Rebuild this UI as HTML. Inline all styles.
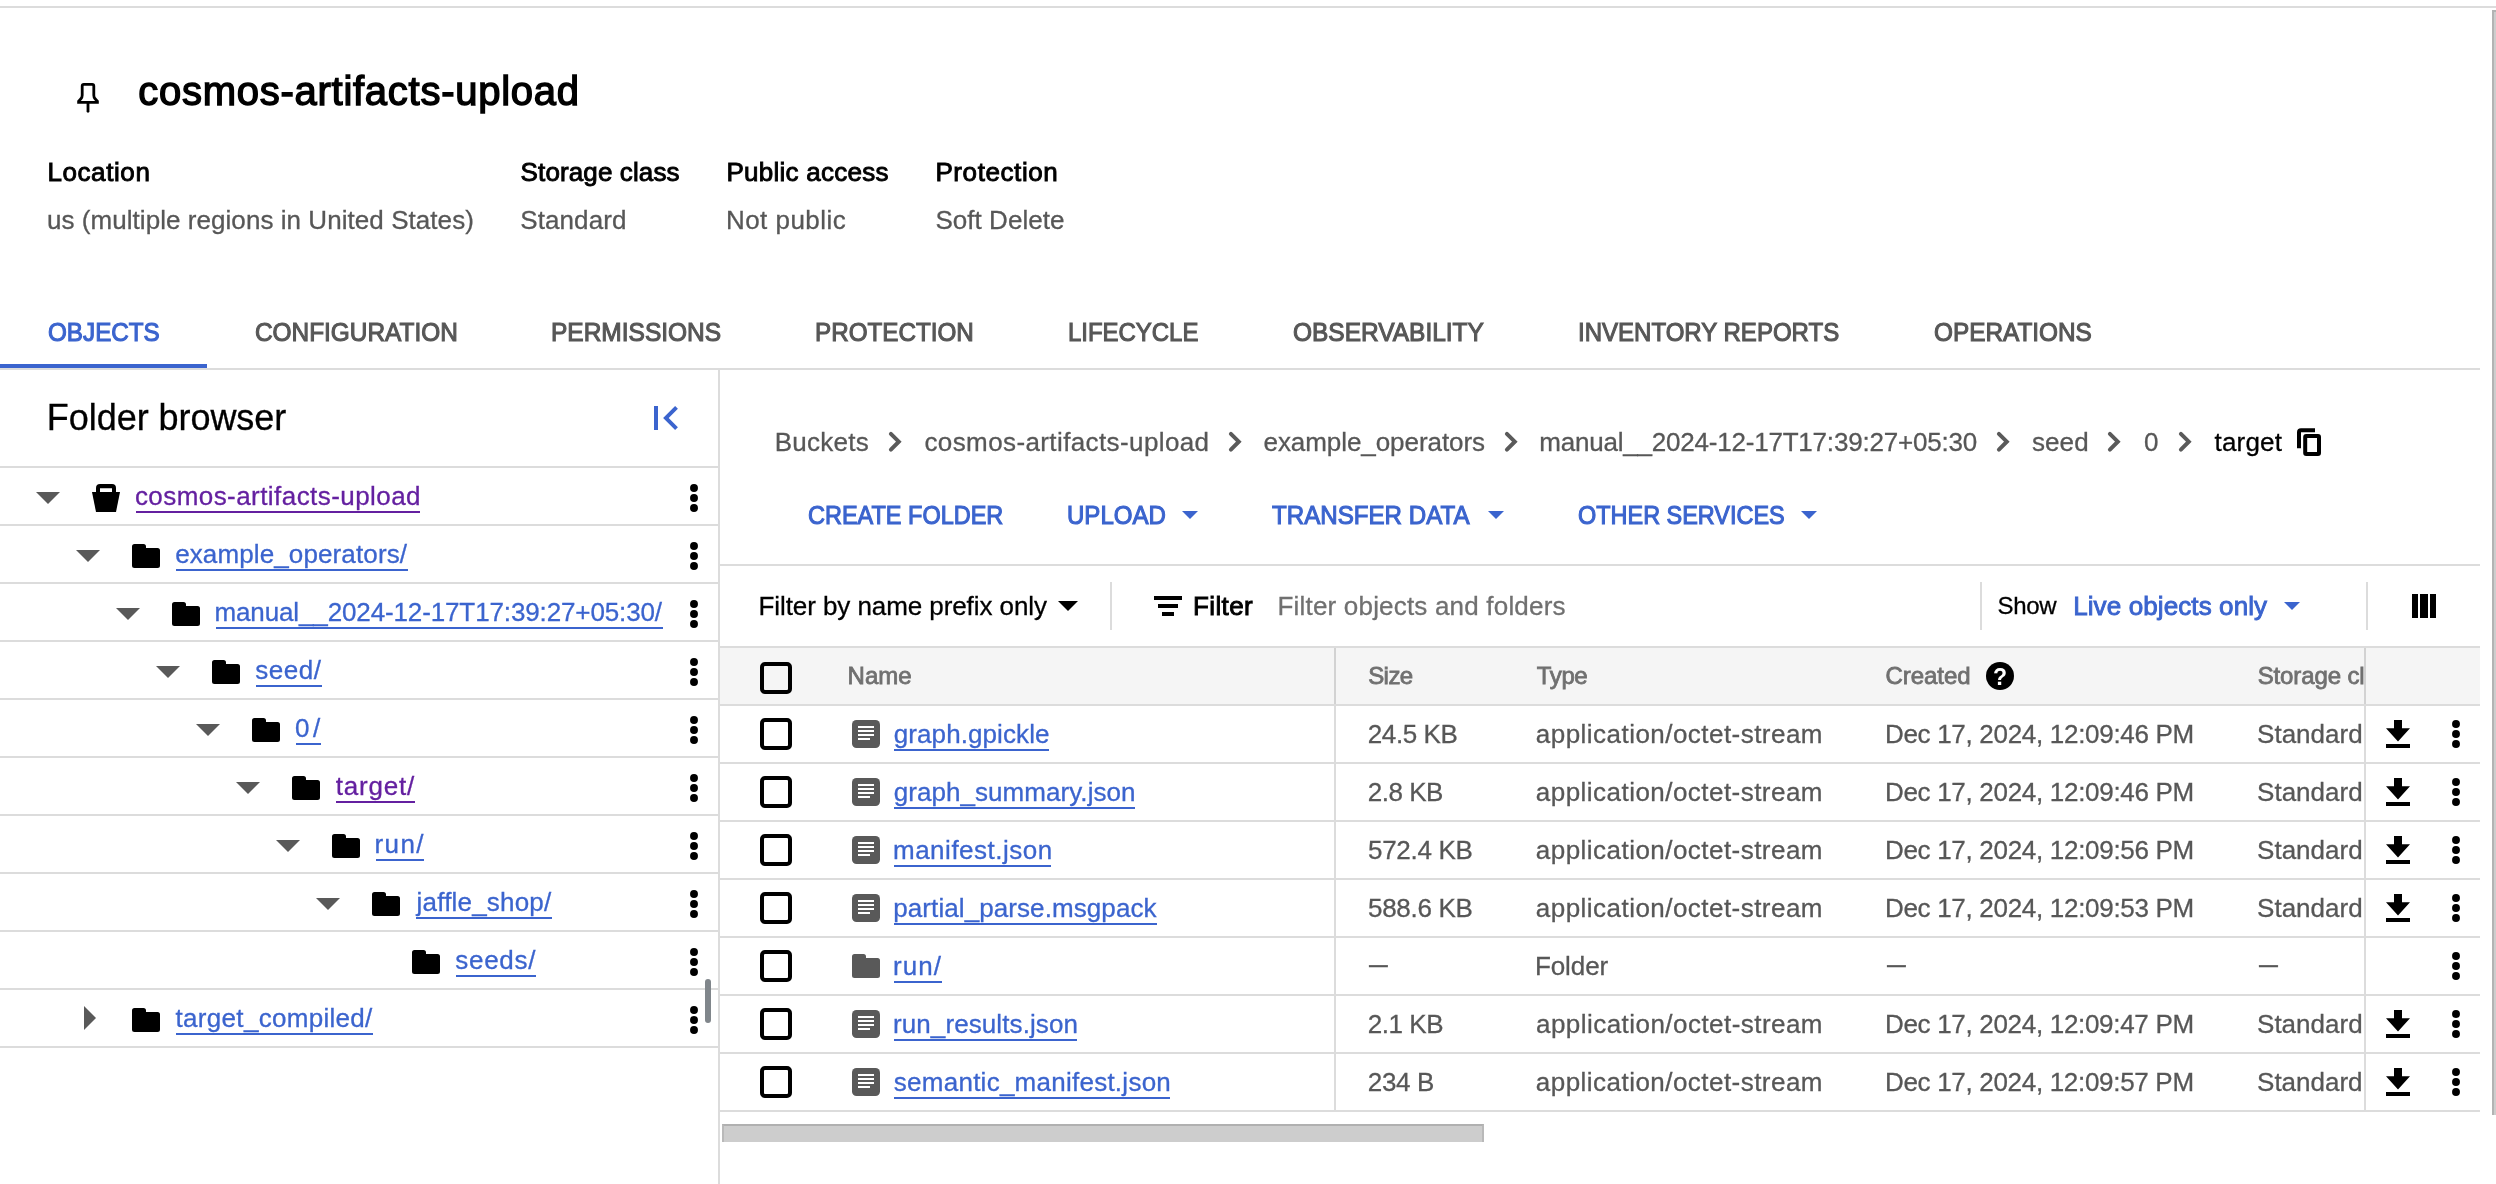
<!DOCTYPE html>
<html lang="en"><head><meta charset="utf-8"><title>cosmos-artifacts-upload - Bucket details</title>
<style>
html,body{margin:0;padding:0;background:#fff}
body{width:2496px;height:1184px;position:relative;overflow:hidden;font-family:"Liberation Sans",sans-serif}
.t{position:absolute;white-space:nowrap;line-height:1;font-weight:400;transform-origin:0 50%;margin:0;padding:0;display:block}
.b{position:absolute}
svg.ic{position:absolute;left:0;top:0}
header,nav,aside,main{position:absolute;left:0;top:0;width:0;height:0;will-change:transform}
.clip{position:absolute;left:2200px;top:648px;width:164px;height:56px;overflow:hidden}
a{color:inherit;text-decoration:none}
</style></head>
<body>
<div id="lines">
<div class="b" style="left:0px;top:6px;width:2496px;height:2px;background:#dcdcdc"></div>
<div class="b" style="left:2492px;top:10px;width:4px;height:1105px;background:#cdcdcd;border-left:2px solid #b3b3b3;border-top:2px solid #b3b3b3;box-sizing:border-box"></div>
<div class="b" style="left:0px;top:368px;width:2480px;height:2px;background:#dcdcdc"></div>
<div class="b" style="left:0px;top:364px;width:207px;height:4px;background:#3b64ce"></div>
<div class="b" style="left:718px;top:370px;width:2px;height:814px;background:#dcdcdc"></div>
<div class="b" style="left:0px;top:466px;width:718px;height:2px;background:#dcdcdc"></div>
<div class="b" style="left:0px;top:524px;width:718px;height:2px;background:#dcdcdc"></div>
<div class="b" style="left:0px;top:582px;width:718px;height:2px;background:#dcdcdc"></div>
<div class="b" style="left:0px;top:640px;width:718px;height:2px;background:#dcdcdc"></div>
<div class="b" style="left:0px;top:698px;width:718px;height:2px;background:#dcdcdc"></div>
<div class="b" style="left:0px;top:756px;width:718px;height:2px;background:#dcdcdc"></div>
<div class="b" style="left:0px;top:814px;width:718px;height:2px;background:#dcdcdc"></div>
<div class="b" style="left:0px;top:872px;width:718px;height:2px;background:#dcdcdc"></div>
<div class="b" style="left:0px;top:930px;width:718px;height:2px;background:#dcdcdc"></div>
<div class="b" style="left:0px;top:988px;width:718px;height:2px;background:#dcdcdc"></div>
<div class="b" style="left:0px;top:1046px;width:718px;height:2px;background:#dcdcdc"></div>
<div class="b" style="left:705px;top:979px;width:6px;height:44px;background:#80868b;border-radius:3px"></div>
<div class="b" style="left:720px;top:564px;width:1760px;height:2px;background:#dcdcdc"></div>
<div class="b" style="left:1110px;top:582px;width:2px;height:48px;background:#dcdcdc"></div>
<div class="b" style="left:1980px;top:582px;width:2px;height:48px;background:#dcdcdc"></div>
<div class="b" style="left:2366px;top:582px;width:2px;height:48px;background:#dcdcdc"></div>
<div class="b" style="left:720px;top:648px;width:1760px;height:56px;background:#f5f5f5"></div>
<div class="b" style="left:720px;top:646px;width:1760px;height:2px;background:#dcdcdc"></div>
<div class="b" style="left:720px;top:704px;width:1760px;height:2px;background:#dcdcdc"></div>
<div class="b" style="left:720px;top:762px;width:1760px;height:2px;background:#dcdcdc"></div>
<div class="b" style="left:720px;top:820px;width:1760px;height:2px;background:#dcdcdc"></div>
<div class="b" style="left:720px;top:878px;width:1760px;height:2px;background:#dcdcdc"></div>
<div class="b" style="left:720px;top:936px;width:1760px;height:2px;background:#dcdcdc"></div>
<div class="b" style="left:720px;top:994px;width:1760px;height:2px;background:#dcdcdc"></div>
<div class="b" style="left:720px;top:1052px;width:1760px;height:2px;background:#dcdcdc"></div>
<div class="b" style="left:720px;top:1110px;width:1760px;height:2px;background:#dcdcdc"></div>
<div class="b" style="left:1334px;top:648px;width:2px;height:462px;background:#dcdcdc"></div>
<div class="b" style="left:2364px;top:648px;width:2px;height:462px;background:#dcdcdc"></div>
<div class="b" style="left:1334px;top:648px;width:2px;height:56px;background:#d2d2d2"></div>
<div class="b" style="left:2364px;top:648px;width:2px;height:56px;background:#d2d2d2"></div>
<div class="b" style="left:722px;top:1124px;width:762px;height:18px;background:#cdcdcd;border-top:2px solid #b0b0b0;border-left:2px solid #b9b9b9;border-right:2px solid #b9b9b9;box-sizing:border-box"></div>
</div>
<header id="bucket-header">
<h1 id="t0" class="t m" style="left:138.25px;top:71.04px;font-size:40px;color:#000;letter-spacing:0.734px;-webkit-text-stroke:1.4px #000">cosmos-artifacts-upload</h1>
<span id="t1" class="t m" style="left:47.43px;top:158.99px;font-size:26px;color:#000;letter-spacing:0.594px;-webkit-text-stroke:0.9px #000">Location</span>
<span id="t2" class="t m" style="left:520.62px;top:158.99px;font-size:26px;color:#000;letter-spacing:0.120px;-webkit-text-stroke:0.9px #000">Storage class</span>
<span id="t3" class="t m" style="left:726.43px;top:158.99px;font-size:26px;color:#000;letter-spacing:0.258px;-webkit-text-stroke:0.9px #000">Public access</span>
<span id="t4" class="t m" style="left:935.43px;top:158.99px;font-size:26px;color:#000;letter-spacing:0.589px;-webkit-text-stroke:0.9px #000">Protection</span>
<span id="t5" class="t" style="left:46.92px;top:206.99px;font-size:26px;color:#575757;letter-spacing:0.056px;-webkit-text-stroke:0.3px #575757">us (multiple regions in United States)</span>
<span id="t6" class="t" style="left:520.21px;top:206.99px;font-size:26px;color:#575757;letter-spacing:0.105px;-webkit-text-stroke:0.3px #575757">Standard</span>
<span id="t7" class="t" style="left:725.94px;top:206.99px;font-size:26px;color:#575757;letter-spacing:0.459px;-webkit-text-stroke:0.3px #575757">Not public</span>
<span id="t8" class="t" style="left:935.51px;top:206.99px;font-size:26px;color:#575757;letter-spacing:0.024px;-webkit-text-stroke:0.3px #575757">Soft Delete</span>
</header>
<nav id="tabs">
<a id="t9" class="t m" style="left:47.89px;top:318.99px;font-size:26px;color:#3b64ce;letter-spacing:0.000px;-webkit-text-stroke:1.1px #3b64ce;transform:scaleX(0.9320)">OBJECTS</a>
<a id="t10" class="t m" style="left:255.15px;top:318.99px;font-size:26px;color:#575757;letter-spacing:0.000px;-webkit-text-stroke:1.1px #575757;transform:scaleX(0.9380)">CONFIGURATION</a>
<a id="t11" class="t m" style="left:551.10px;top:318.99px;font-size:26px;color:#575757;letter-spacing:0.000px;-webkit-text-stroke:1.1px #575757;transform:scaleX(0.9420)">PERMISSIONS</a>
<a id="t12" class="t m" style="left:815.21px;top:318.99px;font-size:26px;color:#575757;letter-spacing:0.000px;-webkit-text-stroke:1.1px #575757;transform:scaleX(0.9318)">PROTECTION</a>
<a id="t13" class="t m" style="left:1068.07px;top:318.99px;font-size:26px;color:#575757;letter-spacing:0.000px;-webkit-text-stroke:1.1px #575757;transform:scaleX(0.9208)">LIFECYCLE</a>
<a id="t14" class="t m" style="left:1293.14px;top:318.99px;font-size:26px;color:#575757;letter-spacing:0.000px;-webkit-text-stroke:1.1px #575757;transform:scaleX(0.9414)">OBSERVABILITY</a>
<a id="t15" class="t m" style="left:1578.35px;top:318.99px;font-size:26px;color:#575757;letter-spacing:0.000px;-webkit-text-stroke:1.1px #575757;transform:scaleX(0.9239)">INVENTORY REPORTS</a>
<a id="t16" class="t m" style="left:1934.43px;top:318.99px;font-size:26px;color:#575757;letter-spacing:0.000px;-webkit-text-stroke:1.1px #575757;transform:scaleX(0.9364)">OPERATIONS</a>
</nav>
<aside id="folder-browser">
<h2 id="t17" class="t" style="left:46.82px;top:399.53px;font-size:36px;color:#000;letter-spacing:-0.047px;-webkit-text-stroke:0.3px #000">Folder browser</h2>
<a id="t18" class="t" style="left:134.89px;top:482.99px;font-size:26px;color:#6420a0;letter-spacing:0.440px;-webkit-text-stroke:0.3px #6420a0">cosmos-artifacts-upload</a>
<a id="t19" class="t" style="left:175.13px;top:540.99px;font-size:26px;color:#3b64ce;letter-spacing:0.123px;-webkit-text-stroke:0.3px #3b64ce">example_operators/</a>
<a id="t20" class="t" style="left:214.47px;top:598.99px;font-size:26px;color:#3b64ce;letter-spacing:-0.127px;-webkit-text-stroke:0.3px #3b64ce">manual__2024-12-17T17:39:27+05:30/</a>
<a id="t21" class="t" style="left:255.28px;top:656.99px;font-size:26px;color:#3b64ce;letter-spacing:0.545px;-webkit-text-stroke:0.3px #3b64ce">seed/</a>
<a id="t22" class="t" style="left:295.04px;top:714.99px;font-size:26px;color:#3b64ce;letter-spacing:3.430px;-webkit-text-stroke:0.3px #3b64ce">0/</a>
<a id="t23" class="t" style="left:335.65px;top:772.99px;font-size:26px;color:#6420a0;letter-spacing:0.829px;-webkit-text-stroke:0.3px #6420a0">target/</a>
<a id="t24" class="t" style="left:374.51px;top:830.99px;font-size:26px;color:#3b64ce;letter-spacing:1.384px;-webkit-text-stroke:0.3px #3b64ce">run/</a>
<a id="t25" class="t" style="left:416.57px;top:888.99px;font-size:26px;color:#3b64ce;letter-spacing:0.198px;-webkit-text-stroke:0.3px #3b64ce">jaffle_shop/</a>
<a id="t26" class="t" style="left:455.28px;top:946.99px;font-size:26px;color:#3b64ce;letter-spacing:0.718px;-webkit-text-stroke:0.3px #3b64ce">seeds/</a>
<a id="t27" class="t" style="left:175.58px;top:1004.99px;font-size:26px;color:#3b64ce;letter-spacing:0.303px;-webkit-text-stroke:0.3px #3b64ce">target_compiled/</a>
</aside>
<main id="objects">
<div id="breadcrumb">
<a id="t28" class="t" style="left:774.65px;top:428.99px;font-size:26px;color:#575757;letter-spacing:0.290px;-webkit-text-stroke:0.3px #575757">Buckets</a>
<a id="t29" class="t" style="left:924.49px;top:428.99px;font-size:26px;color:#575757;letter-spacing:0.390px;-webkit-text-stroke:0.3px #575757">cosmos-artifacts-upload</a>
<a id="t30" class="t" style="left:1263.50px;top:428.99px;font-size:26px;color:#575757;letter-spacing:-0.064px;-webkit-text-stroke:0.3px #575757">example_operators</a>
<a id="t31" class="t" style="left:1539.26px;top:428.99px;font-size:26px;color:#575757;letter-spacing:-0.208px;-webkit-text-stroke:0.3px #575757">manual__2024-12-17T17:39:27+05:30</a>
<a id="t32" class="t" style="left:2031.88px;top:428.99px;font-size:26px;color:#575757;letter-spacing:0.141px;-webkit-text-stroke:0.3px #575757">seed</a>
<a id="t33" class="t" style="left:2144.08px;top:428.99px;font-size:26px;color:#575757;letter-spacing:0.000px;-webkit-text-stroke:0.3px #575757">0</a>
<span id="t34" class="t" style="left:2214.62px;top:428.99px;font-size:26px;color:#000;letter-spacing:0.162px;-webkit-text-stroke:0.3px #000">target</span>
</div>
<div id="actions">
<span id="t35" class="t m" style="left:807.65px;top:501.99px;font-size:26px;color:#3b64ce;letter-spacing:0.000px;-webkit-text-stroke:1.1px #3b64ce;transform:scaleX(0.9033)">CREATE FOLDER</span>
<span id="t36" class="t m" style="left:1066.66px;top:501.99px;font-size:26px;color:#3b64ce;letter-spacing:0.000px;-webkit-text-stroke:1.1px #3b64ce;transform:scaleX(0.9245)">UPLOAD</span>
<span id="t37" class="t m" style="left:1272.37px;top:501.99px;font-size:26px;color:#3b64ce;letter-spacing:0.000px;-webkit-text-stroke:1.1px #3b64ce;transform:scaleX(0.9280)">TRANSFER DATA</span>
<span id="t38" class="t m" style="left:1577.65px;top:501.99px;font-size:26px;color:#3b64ce;letter-spacing:0.000px;-webkit-text-stroke:1.1px #3b64ce;transform:scaleX(0.9018)">OTHER SERVICES</span>
</div>
<div id="filter">
<span id="t39" class="t" style="left:758.48px;top:592.69px;font-size:26px;color:#000;letter-spacing:-0.076px;-webkit-text-stroke:0.3px #000">Filter by name prefix only</span>
<span id="t40" class="t m" style="left:1192.98px;top:592.69px;font-size:26px;color:#000;letter-spacing:0.389px;-webkit-text-stroke:0.9px #000">Filter</span>
<span id="t41" class="t" style="left:1277.52px;top:592.69px;font-size:26px;color:#707070;letter-spacing:0.190px;-webkit-text-stroke:0.3px #707070">Filter objects and folders</span>
<span id="t42" class="t" style="left:1997.60px;top:593.68px;font-size:24px;color:#000;letter-spacing:-0.356px;-webkit-text-stroke:0.3px #000">Show</span>
<span id="t43" class="t m" style="left:2073.18px;top:592.69px;font-size:26px;color:#3b64ce;letter-spacing:0.107px;-webkit-text-stroke:0.9px #3b64ce">Live objects only</span>
</div>
<div id="table">
<span id="t44" class="t m" style="left:847.53px;top:663.68px;font-size:24px;color:#707070;letter-spacing:0.046px;-webkit-text-stroke:0.8px #707070">Name</span>
<span id="t45" class="t m" style="left:1368.13px;top:663.68px;font-size:24px;color:#707070;letter-spacing:-0.538px;-webkit-text-stroke:0.8px #707070">Size</span>
<span id="t46" class="t m" style="left:1536.84px;top:663.68px;font-size:24px;color:#707070;letter-spacing:-0.393px;-webkit-text-stroke:0.8px #707070">Type</span>
<span id="t47" class="t m" style="left:1885.55px;top:663.68px;font-size:24px;color:#707070;letter-spacing:-0.058px;-webkit-text-stroke:0.8px #707070">Created</span>
<div class="clip"><span id="t48" class="t m" style="left:57.65px;top:15.68px;font-size:24px;color:#707070;letter-spacing:-0.120px;-webkit-text-stroke:0.8px #707070">Storage cl<span class="rest">ass</span></span></div>
<a id="t49" class="t" style="left:893.79px;top:720.99px;font-size:26px;color:#3b64ce;letter-spacing:0.086px;-webkit-text-stroke:0.3px #3b64ce">graph.gpickle</a>
<span id="t50" class="t" style="left:1367.80px;top:720.99px;font-size:26px;color:#575757;letter-spacing:-0.413px;-webkit-text-stroke:0.3px #575757">24.5 KB</span>
<span id="t51" class="t" style="left:1535.87px;top:720.99px;font-size:26px;color:#575757;letter-spacing:0.460px;-webkit-text-stroke:0.3px #575757">application/octet-stream</span>
<span id="t52" class="t" style="left:1884.94px;top:720.99px;font-size:26px;color:#575757;letter-spacing:-0.301px;-webkit-text-stroke:0.3px #575757">Dec 17, 2024, 12:09:46 PM</span>
<span id="t53" class="t" style="left:2257.09px;top:720.99px;font-size:26px;color:#575757;letter-spacing:0.001px;-webkit-text-stroke:0.3px #575757">Standard</span>
<a id="t54" class="t" style="left:893.79px;top:778.99px;font-size:26px;color:#3b64ce;letter-spacing:0.051px;-webkit-text-stroke:0.3px #3b64ce">graph_summary.json</a>
<span id="t55" class="t" style="left:1367.80px;top:778.99px;font-size:26px;color:#575757;letter-spacing:-0.486px;-webkit-text-stroke:0.3px #575757">2.8 KB</span>
<span id="t56" class="t" style="left:1535.87px;top:778.99px;font-size:26px;color:#575757;letter-spacing:0.460px;-webkit-text-stroke:0.3px #575757">application/octet-stream</span>
<span id="t57" class="t" style="left:1884.94px;top:778.99px;font-size:26px;color:#575757;letter-spacing:-0.301px;-webkit-text-stroke:0.3px #575757">Dec 17, 2024, 12:09:46 PM</span>
<span id="t58" class="t" style="left:2257.09px;top:778.99px;font-size:26px;color:#575757;letter-spacing:0.001px;-webkit-text-stroke:0.3px #575757">Standard</span>
<a id="t59" class="t" style="left:892.98px;top:836.99px;font-size:26px;color:#3b64ce;letter-spacing:0.513px;-webkit-text-stroke:0.3px #3b64ce">manifest.json</a>
<span id="t60" class="t" style="left:1368.02px;top:836.99px;font-size:26px;color:#575757;letter-spacing:-0.306px;-webkit-text-stroke:0.3px #575757">572.4 KB</span>
<span id="t61" class="t" style="left:1535.87px;top:836.99px;font-size:26px;color:#575757;letter-spacing:0.460px;-webkit-text-stroke:0.3px #575757">application/octet-stream</span>
<span id="t62" class="t" style="left:1884.94px;top:836.99px;font-size:26px;color:#575757;letter-spacing:-0.301px;-webkit-text-stroke:0.3px #575757">Dec 17, 2024, 12:09:56 PM</span>
<span id="t63" class="t" style="left:2257.09px;top:836.99px;font-size:26px;color:#575757;letter-spacing:0.001px;-webkit-text-stroke:0.3px #575757">Standard</span>
<a id="t64" class="t" style="left:893.24px;top:894.99px;font-size:26px;color:#3b64ce;letter-spacing:0.085px;-webkit-text-stroke:0.3px #3b64ce">partial_parse.msgpack</a>
<span id="t65" class="t" style="left:1368.02px;top:894.99px;font-size:26px;color:#575757;letter-spacing:-0.306px;-webkit-text-stroke:0.3px #575757">588.6 KB</span>
<span id="t66" class="t" style="left:1535.87px;top:894.99px;font-size:26px;color:#575757;letter-spacing:0.460px;-webkit-text-stroke:0.3px #575757">application/octet-stream</span>
<span id="t67" class="t" style="left:1884.94px;top:894.99px;font-size:26px;color:#575757;letter-spacing:-0.301px;-webkit-text-stroke:0.3px #575757">Dec 17, 2024, 12:09:53 PM</span>
<span id="t68" class="t" style="left:2257.09px;top:894.99px;font-size:26px;color:#575757;letter-spacing:0.001px;-webkit-text-stroke:0.3px #575757">Standard</span>
<a id="t69" class="t" style="left:893.07px;top:952.99px;font-size:26px;color:#3b64ce;letter-spacing:1.047px;-webkit-text-stroke:0.3px #3b64ce">run/</a>
<span id="t70" class="t" style="left:1534.94px;top:952.99px;font-size:26px;color:#575757;letter-spacing:-0.086px;-webkit-text-stroke:0.3px #575757">Folder</span>
<a id="t74" class="t" style="left:893.00px;top:1010.99px;font-size:26px;color:#3b64ce;letter-spacing:0.093px;-webkit-text-stroke:0.3px #3b64ce">run_results.json</a>
<span id="t75" class="t" style="left:1367.82px;top:1010.99px;font-size:26px;color:#575757;letter-spacing:-0.478px;-webkit-text-stroke:0.3px #575757">2.1 KB</span>
<span id="t76" class="t" style="left:1536.00px;top:1010.99px;font-size:26px;color:#575757;letter-spacing:0.456px;-webkit-text-stroke:0.3px #575757">application/octet-stream</span>
<span id="t77" class="t" style="left:1884.94px;top:1010.99px;font-size:26px;color:#575757;letter-spacing:-0.308px;-webkit-text-stroke:0.3px #575757">Dec 17, 2024, 12:09:47 PM</span>
<span id="t78" class="t" style="left:2257.05px;top:1010.99px;font-size:26px;color:#575757;letter-spacing:0.005px;-webkit-text-stroke:0.3px #575757">Standard</span>
<a id="t79" class="t" style="left:893.83px;top:1068.99px;font-size:26px;color:#3b64ce;letter-spacing:0.252px;-webkit-text-stroke:0.3px #3b64ce">semantic_manifest.json</a>
<span id="t80" class="t" style="left:1367.82px;top:1068.99px;font-size:26px;color:#575757;letter-spacing:-0.333px;-webkit-text-stroke:0.3px #575757">234 B</span>
<span id="t81" class="t" style="left:1535.87px;top:1068.99px;font-size:26px;color:#575757;letter-spacing:0.460px;-webkit-text-stroke:0.3px #575757">application/octet-stream</span>
<span id="t82" class="t" style="left:1884.94px;top:1068.99px;font-size:26px;color:#575757;letter-spacing:-0.310px;-webkit-text-stroke:0.3px #575757">Dec 17, 2024, 12:09:57 PM</span>
<span id="t83" class="t" style="left:2257.05px;top:1068.99px;font-size:26px;color:#575757;letter-spacing:-0.009px;-webkit-text-stroke:0.3px #575757">Standard</span>
<span id="t71" class="t" style="left:1369.27px;top:950.99px;font-size:26px;color:#575757;letter-spacing:0.000px;-webkit-text-stroke:0.3px #575757;transform:scaleX(0.7230)">—</span>
<span id="t72" class="t" style="left:1886.67px;top:950.99px;font-size:26px;color:#575757;letter-spacing:0.000px;-webkit-text-stroke:0.3px #575757;transform:scaleX(0.7238)">—</span>
<span id="t73" class="t" style="left:2258.90px;top:950.99px;font-size:26px;color:#575757;letter-spacing:0.000px;-webkit-text-stroke:0.3px #575757;transform:scaleX(0.7225)">—</span>
</div>
</main>
<div id="underlines">
<div class="b" style="left:135.5px;top:511.0px;width:284.0px;height:2px;background:#6420a0"></div>
<div class="b" style="left:175.5px;top:569.0px;width:232.0px;height:2px;background:#3b64ce"></div>
<div class="b" style="left:215.5px;top:627.0px;width:447.0px;height:2px;background:#3b64ce"></div>
<div class="b" style="left:255.5px;top:685.0px;width:66.0px;height:2px;background:#3b64ce"></div>
<div class="b" style="left:295.5px;top:743.0px;width:25.0px;height:2px;background:#3b64ce"></div>
<div class="b" style="left:335.5px;top:801.0px;width:79.5px;height:2px;background:#6420a0"></div>
<div class="b" style="left:375.5px;top:859.0px;width:48.5px;height:2px;background:#3b64ce"></div>
<div class="b" style="left:415.5px;top:917.0px;width:136.5px;height:2px;background:#3b64ce"></div>
<div class="b" style="left:455.5px;top:975.0px;width:80.5px;height:2px;background:#3b64ce"></div>
<div class="b" style="left:175.5px;top:1033.0px;width:197.5px;height:2px;background:#3b64ce"></div>
<div class="b" style="left:894.0px;top:749.0px;width:155.0px;height:2px;background:#3b64ce"></div>
<div class="b" style="left:894.0px;top:807.0px;width:240.7px;height:2px;background:#3b64ce"></div>
<div class="b" style="left:894.0px;top:865.0px;width:157.4px;height:2px;background:#3b64ce"></div>
<div class="b" style="left:894.0px;top:923.0px;width:263.0px;height:2px;background:#3b64ce"></div>
<div class="b" style="left:894.0px;top:981.0px;width:47.8px;height:2px;background:#3b64ce"></div>
<div class="b" style="left:894.0px;top:1039.0px;width:183.0px;height:2px;background:#3b64ce"></div>
<div class="b" style="left:894.0px;top:1097.0px;width:276.0px;height:2px;background:#3b64ce"></div>
</div>
<svg class="ic" width="2496" height="1184" viewBox="0 0 2496 1184">
<path d="M82.2,95.2V86a1.7,1.7 0 0 1 1.7,-1.7H92.1a1.7,1.7 0 0 1 1.7,1.7V95.2c0,1.4 0.5,2.6 1.3,3.6L97.4,101.2V102.3H78.6V101.2L80.9,98.8c0.8,-1 1.3,-2.2 1.3,-3.6z" fill="none" stroke="#000" stroke-width="2.8" stroke-linejoin="miter"/><path d="M88,103v8.3" fill="none" stroke="#000" stroke-width="2.8" stroke-linecap="round"/>
<rect x="654" y="406" width="4" height="24" fill="#3b64ce"/><path d="M677.9,408.8l-9.2,9.2l9.2,9.2l-2.8,2.8l-12,-12l12,-12z" fill="#3b64ce"/>
<path d="M36,492.0h24l-12.0,12z" fill="#595959"/>
<path d="M92,492h28l-4,20h-20z" fill="#000"/><path d="M96,493v-5a4,4 0 0 1 4,-4h12a4,4 0 0 1 4,4v5h-4v-4.8h-12v4.8z" fill="#000"/>
<circle cx="694" cy="488" r="3.95" fill="#000"/><circle cx="694" cy="498" r="3.95" fill="#000"/><circle cx="694" cy="508" r="3.95" fill="#000"/>
<path d="M76,550.0h24l-12.0,12z" fill="#595959"/>
<path d="M134.5,544h9a2.5,2.5 0 0 1 2.5,2.5v1.5h11.5a2.5,2.5 0 0 1 2.5,2.5v15a2.5,2.5 0 0 1 -2.5,2.5h-23a2.5,2.5 0 0 1 -2.5,-2.5v-19a2.5,2.5 0 0 1 2.5,-2.5z" fill="#000"/>
<circle cx="694" cy="546" r="3.95" fill="#000"/><circle cx="694" cy="556" r="3.95" fill="#000"/><circle cx="694" cy="566" r="3.95" fill="#000"/>
<path d="M116,608.0h24l-12.0,12z" fill="#595959"/>
<path d="M174.5,602h9a2.5,2.5 0 0 1 2.5,2.5v1.5h11.5a2.5,2.5 0 0 1 2.5,2.5v15a2.5,2.5 0 0 1 -2.5,2.5h-23a2.5,2.5 0 0 1 -2.5,-2.5v-19a2.5,2.5 0 0 1 2.5,-2.5z" fill="#000"/>
<circle cx="694" cy="604" r="3.95" fill="#000"/><circle cx="694" cy="614" r="3.95" fill="#000"/><circle cx="694" cy="624" r="3.95" fill="#000"/>
<path d="M156,666.0h24l-12.0,12z" fill="#595959"/>
<path d="M214.5,660h9a2.5,2.5 0 0 1 2.5,2.5v1.5h11.5a2.5,2.5 0 0 1 2.5,2.5v15a2.5,2.5 0 0 1 -2.5,2.5h-23a2.5,2.5 0 0 1 -2.5,-2.5v-19a2.5,2.5 0 0 1 2.5,-2.5z" fill="#000"/>
<circle cx="694" cy="662" r="3.95" fill="#000"/><circle cx="694" cy="672" r="3.95" fill="#000"/><circle cx="694" cy="682" r="3.95" fill="#000"/>
<path d="M196,724.0h24l-12.0,12z" fill="#595959"/>
<path d="M254.5,718h9a2.5,2.5 0 0 1 2.5,2.5v1.5h11.5a2.5,2.5 0 0 1 2.5,2.5v15a2.5,2.5 0 0 1 -2.5,2.5h-23a2.5,2.5 0 0 1 -2.5,-2.5v-19a2.5,2.5 0 0 1 2.5,-2.5z" fill="#000"/>
<circle cx="694" cy="720" r="3.95" fill="#000"/><circle cx="694" cy="730" r="3.95" fill="#000"/><circle cx="694" cy="740" r="3.95" fill="#000"/>
<path d="M236,782.0h24l-12.0,12z" fill="#595959"/>
<path d="M294.5,776h9a2.5,2.5 0 0 1 2.5,2.5v1.5h11.5a2.5,2.5 0 0 1 2.5,2.5v15a2.5,2.5 0 0 1 -2.5,2.5h-23a2.5,2.5 0 0 1 -2.5,-2.5v-19a2.5,2.5 0 0 1 2.5,-2.5z" fill="#000"/>
<circle cx="694" cy="778" r="3.95" fill="#000"/><circle cx="694" cy="788" r="3.95" fill="#000"/><circle cx="694" cy="798" r="3.95" fill="#000"/>
<path d="M276,840.0h24l-12.0,12z" fill="#595959"/>
<path d="M334.5,834h9a2.5,2.5 0 0 1 2.5,2.5v1.5h11.5a2.5,2.5 0 0 1 2.5,2.5v15a2.5,2.5 0 0 1 -2.5,2.5h-23a2.5,2.5 0 0 1 -2.5,-2.5v-19a2.5,2.5 0 0 1 2.5,-2.5z" fill="#000"/>
<circle cx="694" cy="836" r="3.95" fill="#000"/><circle cx="694" cy="846" r="3.95" fill="#000"/><circle cx="694" cy="856" r="3.95" fill="#000"/>
<path d="M316,898.0h24l-12.0,12z" fill="#595959"/>
<path d="M374.5,892h9a2.5,2.5 0 0 1 2.5,2.5v1.5h11.5a2.5,2.5 0 0 1 2.5,2.5v15a2.5,2.5 0 0 1 -2.5,2.5h-23a2.5,2.5 0 0 1 -2.5,-2.5v-19a2.5,2.5 0 0 1 2.5,-2.5z" fill="#000"/>
<circle cx="694" cy="894" r="3.95" fill="#000"/><circle cx="694" cy="904" r="3.95" fill="#000"/><circle cx="694" cy="914" r="3.95" fill="#000"/>
<path d="M414.5,950h9a2.5,2.5 0 0 1 2.5,2.5v1.5h11.5a2.5,2.5 0 0 1 2.5,2.5v15a2.5,2.5 0 0 1 -2.5,2.5h-23a2.5,2.5 0 0 1 -2.5,-2.5v-19a2.5,2.5 0 0 1 2.5,-2.5z" fill="#000"/>
<circle cx="694" cy="952" r="3.95" fill="#000"/><circle cx="694" cy="962" r="3.95" fill="#000"/><circle cx="694" cy="972" r="3.95" fill="#000"/>
<path d="M84,1006l12,12l-12,12z" fill="#595959"/>
<path d="M134.5,1008h9a2.5,2.5 0 0 1 2.5,2.5v1.5h11.5a2.5,2.5 0 0 1 2.5,2.5v15a2.5,2.5 0 0 1 -2.5,2.5h-23a2.5,2.5 0 0 1 -2.5,-2.5v-19a2.5,2.5 0 0 1 2.5,-2.5z" fill="#000"/>
<circle cx="694" cy="1010" r="3.95" fill="#000"/><circle cx="694" cy="1020" r="3.95" fill="#000"/><circle cx="694" cy="1030" r="3.95" fill="#000"/>
<path d="M890.9,433.8l7.9,7.9l-7.9,7.9" fill="none" stroke="#5a5a5a" stroke-width="4" stroke-linecap="round" stroke-linejoin="miter"/>
<path d="M1230.9,433.8l7.9,7.9l-7.9,7.9" fill="none" stroke="#5a5a5a" stroke-width="4" stroke-linecap="round" stroke-linejoin="miter"/>
<path d="M1506.9,433.8l7.9,7.9l-7.9,7.9" fill="none" stroke="#5a5a5a" stroke-width="4" stroke-linecap="round" stroke-linejoin="miter"/>
<path d="M1998.9,433.8l7.9,7.9l-7.9,7.9" fill="none" stroke="#5a5a5a" stroke-width="4" stroke-linecap="round" stroke-linejoin="miter"/>
<path d="M2109.9,433.8l7.9,7.9l-7.9,7.9" fill="none" stroke="#5a5a5a" stroke-width="4" stroke-linecap="round" stroke-linejoin="miter"/>
<path d="M2180.9,433.8l7.9,7.9l-7.9,7.9" fill="none" stroke="#5a5a5a" stroke-width="4" stroke-linecap="round" stroke-linejoin="miter"/>
<path d="M2315,430.2h-14a2,2 0 0 0 -2,2v16" fill="none" stroke="#000" stroke-width="4"/><rect x="2305.2" y="436" width="13.8" height="18" rx="1" fill="none" stroke="#000" stroke-width="4"/>
<path d="M1182,511h16l-8.0,8z" fill="#3b64ce"/>
<path d="M1488,511h16l-8.0,8z" fill="#3b64ce"/>
<path d="M1801,511h16l-8.0,8z" fill="#3b64ce"/>
<path d="M1058,601h20l-10.0,10z" fill="#000"/>
<path d="M1154,596h28v4h-28zm4,8h20v4h-20zm4,8h12v4h-12z" fill="#000"/>
<path d="M2284,602h16l-8.0,8z" fill="#3b64ce"/>
<path d="M2412,594h6v24h-6zm8,0h8v24h-8zm10,0h6v24h-6z" fill="#000"/>
<rect x="762" y="664" width="28" height="28" rx="3" fill="none" stroke="#000" stroke-width="4"/>
<circle cx="2000" cy="676" r="14" fill="#000"/>
<rect x="762" y="720" width="28" height="28" rx="3" fill="none" stroke="#000" stroke-width="4"/>
<rect x="852" y="720" width="28" height="28" rx="4.5" fill="#595959"/><path d="M858,726h16v2h-16zm0,4h16v2h-16zm0,4h16v2h-16zm0,4h12v2h-12z" fill="#fff"/>
<path d="M2394,720h8v8.2h8l-12,13.4l-12,-13.4h8z" fill="#000"/><rect x="2386" y="744" width="24" height="4" fill="#000"/>
<circle cx="2456" cy="724" r="3.95" fill="#000"/><circle cx="2456" cy="734" r="3.95" fill="#000"/><circle cx="2456" cy="744" r="3.95" fill="#000"/>
<rect x="762" y="778" width="28" height="28" rx="3" fill="none" stroke="#000" stroke-width="4"/>
<rect x="852" y="778" width="28" height="28" rx="4.5" fill="#595959"/><path d="M858,784h16v2h-16zm0,4h16v2h-16zm0,4h16v2h-16zm0,4h12v2h-12z" fill="#fff"/>
<path d="M2394,778h8v8.2h8l-12,13.4l-12,-13.4h8z" fill="#000"/><rect x="2386" y="802" width="24" height="4" fill="#000"/>
<circle cx="2456" cy="782" r="3.95" fill="#000"/><circle cx="2456" cy="792" r="3.95" fill="#000"/><circle cx="2456" cy="802" r="3.95" fill="#000"/>
<rect x="762" y="836" width="28" height="28" rx="3" fill="none" stroke="#000" stroke-width="4"/>
<rect x="852" y="836" width="28" height="28" rx="4.5" fill="#595959"/><path d="M858,842h16v2h-16zm0,4h16v2h-16zm0,4h16v2h-16zm0,4h12v2h-12z" fill="#fff"/>
<path d="M2394,836h8v8.2h8l-12,13.4l-12,-13.4h8z" fill="#000"/><rect x="2386" y="860" width="24" height="4" fill="#000"/>
<circle cx="2456" cy="840" r="3.95" fill="#000"/><circle cx="2456" cy="850" r="3.95" fill="#000"/><circle cx="2456" cy="860" r="3.95" fill="#000"/>
<rect x="762" y="894" width="28" height="28" rx="3" fill="none" stroke="#000" stroke-width="4"/>
<rect x="852" y="894" width="28" height="28" rx="4.5" fill="#595959"/><path d="M858,900h16v2h-16zm0,4h16v2h-16zm0,4h16v2h-16zm0,4h12v2h-12z" fill="#fff"/>
<path d="M2394,894h8v8.2h8l-12,13.4l-12,-13.4h8z" fill="#000"/><rect x="2386" y="918" width="24" height="4" fill="#000"/>
<circle cx="2456" cy="898" r="3.95" fill="#000"/><circle cx="2456" cy="908" r="3.95" fill="#000"/><circle cx="2456" cy="918" r="3.95" fill="#000"/>
<rect x="762" y="952" width="28" height="28" rx="3" fill="none" stroke="#000" stroke-width="4"/>
<path d="M854.5,954h9a2.5,2.5 0 0 1 2.5,2.5v1.5h11.5a2.5,2.5 0 0 1 2.5,2.5v15a2.5,2.5 0 0 1 -2.5,2.5h-23a2.5,2.5 0 0 1 -2.5,-2.5v-19a2.5,2.5 0 0 1 2.5,-2.5z" fill="#595959"/>
<circle cx="2456" cy="956" r="3.95" fill="#000"/><circle cx="2456" cy="966" r="3.95" fill="#000"/><circle cx="2456" cy="976" r="3.95" fill="#000"/>
<rect x="762" y="1010" width="28" height="28" rx="3" fill="none" stroke="#000" stroke-width="4"/>
<rect x="852" y="1010" width="28" height="28" rx="4.5" fill="#595959"/><path d="M858,1016h16v2h-16zm0,4h16v2h-16zm0,4h16v2h-16zm0,4h12v2h-12z" fill="#fff"/>
<path d="M2394,1010h8v8.2h8l-12,13.4l-12,-13.4h8z" fill="#000"/><rect x="2386" y="1034" width="24" height="4" fill="#000"/>
<circle cx="2456" cy="1014" r="3.95" fill="#000"/><circle cx="2456" cy="1024" r="3.95" fill="#000"/><circle cx="2456" cy="1034" r="3.95" fill="#000"/>
<rect x="762" y="1068" width="28" height="28" rx="3" fill="none" stroke="#000" stroke-width="4"/>
<rect x="852" y="1068" width="28" height="28" rx="4.5" fill="#595959"/><path d="M858,1074h16v2h-16zm0,4h16v2h-16zm0,4h16v2h-16zm0,4h12v2h-12z" fill="#fff"/>
<path d="M2394,1068h8v8.2h8l-12,13.4l-12,-13.4h8z" fill="#000"/><rect x="2386" y="1092" width="24" height="4" fill="#000"/>
<circle cx="2456" cy="1072" r="3.95" fill="#000"/><circle cx="2456" cy="1082" r="3.95" fill="#000"/><circle cx="2456" cy="1092" r="3.95" fill="#000"/>
<text x="2000" y="684.5" font-family="Liberation Sans, sans-serif" font-size="23" font-weight="700" fill="#fff" text-anchor="middle">?</text>
</svg>
</body></html>
